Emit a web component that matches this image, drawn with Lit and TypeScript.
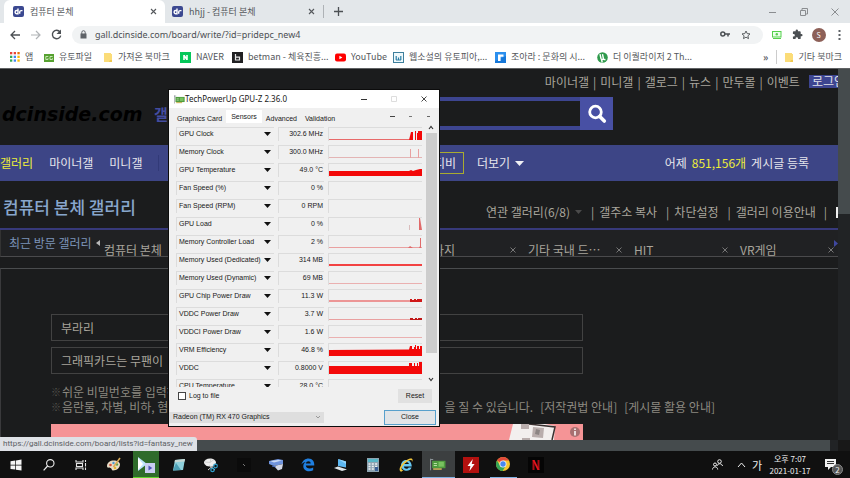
import { LitElement, html, svg, css } from "lit";
import { customElement } from "lit/decorators.js";
import { classMap } from "lit/directives/class-map.js";

const shared = css`
  *,
  *::before,
  *::after { box-sizing: border-box; }
  button, input, select { font: inherit; color: inherit; margin: 0; padding: 0; border: 0; background: none; border-radius: 0; outline: 0; min-width: 0; }
  button { display: inline-flex; align-items: center; justify-content: center; white-space: nowrap; }
  a { color: inherit; text-decoration: none; white-space: nowrap; }
  svg { display: block; flex: none; }
`;

/* ---------- icons ---------- */
const dcIcon = html`<svg width="11" height="11" viewBox="0 0 11 11"><rect width="11" height="11" rx="2" fill="#3b4890"/><path d="M5 2.5v5.2H3.7a1.6 1.6 0 0 1 0-3.2H5M9.5 4.6H8.2a1.5 1.5 0 0 0-1.5 1.5v1.6" fill="none" stroke="#fff" stroke-width="1.4"/></svg>`;
const closeIcon = html`<svg width="7" height="7" viewBox="0 0 7 7"><path d="M1 1l5 5M6 1L1 6" stroke="#55585c" stroke-width="1.1"/></svg>`;
const folderIcon = html`<svg width="10" height="11" viewBox="0 0 10 11"><path d="M1 1h7v1h1v8H1z" fill="#fbdc78"/><path d="M7 8h2v2H6z" fill="#f0c850"/></svg>`;

const bookmarkIcons: Record<string, unknown> = {
  apps: html`<svg width="10" height="10" viewBox="0 0 10 10">
    ${[0, 1, 2].map((r) => [0, 1, 2].map((c) => svg`<rect x=${c * 3.7} y=${r * 3.7} width="2.3" height="2.3" fill=${["#ea4335", "#ea4335", "#e8710a", "#34a853", "#4285f4", "#fbbc04", "#34a853", "#4285f4", "#fbbc04"][r * 3 + c]}/>`))}
  </svg>`,
  file: html`<svg width="10" height="9" viewBox="0 0 10 9"><rect y="1" width="10" height="8" fill="#56a130"/><path d="M4.3 3.5H1.8v3h2.2V5.2M8.6 3.5H6v3h2.4V5.2" fill="none" stroke="#d5eec4" stroke-width=".9"/></svg>`,
  folder: folderIcon,
  naver: html`<svg width="11" height="11" viewBox="0 0 11 11"><rect width="11" height="11" fill="#05c75a"/><path d="M3.2 8V3h1.6l1.4 2.2V3h1.6v5H6.2L4.8 5.8V8z" fill="#fff"/></svg>`,
  betman: html`<svg width="11" height="11" viewBox="0 0 11 11"><rect width="11" height="11" fill="#202022"/><path d="M3.5 2v6h4V5.2h-4" fill="none" stroke="#e6e6e6" stroke-width="1.2"/></svg>`,
  youtube: html`<svg width="11" height="11" viewBox="0 0 11 11"><rect y="1.6" width="11" height="7.8" rx="2" fill="#f00"/><path d="M4.4 3.7v3.6l3-1.8z" fill="#fff"/></svg>`,
  novel: html`<svg width="11" height="11" viewBox="0 0 11 11"><rect x=".5" y=".5" width="10" height="10" fill="#eef8fb" stroke="#3d7f9c"/><path d="M3.200 4v4M5.500 5.500v2.500M7.800 4v4M3 8h5" stroke="#2a7ea6" stroke-width="1.200"/></svg>`,
  joara: html`<svg width="11" height="11" viewBox="0 0 11 11"><rect width="11" height="11" fill="#1677d8"/><path d="M0 0h11v4L0 9z" fill="#2b8fee"/><path d="M3 9V2.5h5.5v2.2H5.6V9z" fill="#fff"/></svg>`,
  torrent: html`<svg width="11" height="11" viewBox="0 0 11 11"><circle cx="5.5" cy="5.5" r="5.3" fill="#2f9a4c"/><path d="M3 2.2l1 4.3c.4 1.5 2.6 1.2 2.3-.4l-.8-3.9M6.5 6.5c.3 1.2 1 1.3 2 1M4.4 7l.8 3.4" fill="none" stroke="#fff" stroke-width="1.4"/></svg>`,
};

const bookmarks: [string, string][] = [
  ["apps", "앱"],
  ["file", "유토파일"],
  ["folder", "가져온 북마크"],
  ["naver", "NAVER"],
  ["betman", "betman - 체육진흥..."],
  ["youtube", "YouTube"],
  ["novel", "웹소설의 유토피아,..."],
  ["joara", "조아라 : 문화의 시..."],
  ["torrent", "더 이퀄라이저 2 Th..."],
];

/* ---------- sensor window ---------- */
const S = "#f30808";
const P = "#e9a0a0";
const sensors: [string, string, unknown][] = [
  ["GPU Clock", "302.6 MHz", svg`<path d="M0 11.5h80" stroke="#e86a6a"/><path d="M80 12l2-8h2v8zM86 12V3h1v9zM88 12V5h1V3h4v9z" fill=${S}/>`],
  ["Memory Clock", "300.0 MHz", svg`<path d="M0 11.5h93" stroke="#e3b4b4"/><path d="M81.500 3v9M89.500 3v9" stroke=${P}/>`],
  ["GPU Temperature", "49.0 °C", svg`<path d="M0 12V7h80l2-1 2 1 3-1 4-1h2v7z" fill=${S}/>`],
  ["Fan Speed (%)", "0 %", ""],
  ["Fan Speed (RPM)", "0 RPM", ""],
  ["GPU Load", "0 %", svg`<path d="M80.500 7v5" stroke="#d9bcbc"/><path d="M90 12V0h1l2 12z" fill="#e06a6a"/>`],
  ["Memory Controller Load", "2 %", svg`<path d="M0 11.500h93" stroke=${P}/><path d="M79 12l2-2 3 2zM90 12l1-2V2h1v10z" fill="#e06a6a"/>`],
  ["Memory Used (Dedicated)", "314 MB", svg`<path d="M0 11h93" stroke=${S} stroke-width="1.400"/>`],
  ["Memory Used (Dynamic)", "69 MB", svg`<path d="M0 11.500h93" stroke=${P} stroke-width=".8"/>`],
  ["GPU Chip Power Draw", "11.3 W", svg`<path d="M0 11h93" stroke="#e83c3c" stroke-width="1.200"/><path d="M81 11V9h2v1h2V9h2v1h1V9h5v3H81z" fill="#d01818"/>`],
  ["VDDC Power Draw", "3.7 W", svg`<path d="M0 11.500h93" stroke=${P}/><path d="M81 10h3v1h2v-1h2v1h1v-1h4v2H81z" fill="#c01818"/>`],
  ["VDDCI Power Draw", "1.6 W", svg`<path d="M0 11.500h93" stroke=${P} stroke-width=".8"/>`],
  ["VRM Efficiency", "46.8 %", svg`<path d="M0 12V6l80-.5 1-3.500h2v3h2V3h1V1h1v4h1V2h2v3h1V2h2v10z" fill=${S}/>`],
  ["VDDC", "0.8000 V", svg`<path d="M0 12V4h80V1h3v3h2V1h1v3h2V1h1v3h1V0h3v12z" fill=${S}/>`],
  ["CPU Temperature", "28.0 °C", ""],
];

const cardIcon = (w: number, h: number) => html`<svg width=${w} height=${h} viewBox="0 0 15 11"><path d="M.5 0v11M0 .8h3" stroke="#8a9296"/><rect x="2" y="2" width="12.500" height="7" fill="#4f9a3e"/><path d="M3 9h8v1.500H3z" fill="#c9b458"/><rect x="8" y="3" width="5" height="4.500" fill="#79c25f"/><path d="M3.500 4.500h3M3.500 6.500h3" stroke="#b8e2a6"/></svg>`;

@customElement("gpu-window")
export class GpuWindow extends LitElement {
  static styles = [
    shared,
    css`
      :host { display: flex; flex-direction: column; background: #f0f0f0; color: #181818; font: 7px/10px "Liberation Sans", Arial, sans-serif; box-shadow: 0 0 0 1px #0c0c0c; }
      .title { display: flex; align-items: center; height: 18px; padding-left: 5px; background: #fff; font: 8px/14px "Noto Sans", sans-serif; }
      .title span { flex: 1; }
      .title button { width: 30px; height: 18px; }
      .tabs { display: flex; height: 17px; padding: 2px 0 0 4px; align-items: flex-start; }
      .tabs button { height: 15px; padding: 2px 4px 0; }
      .tabs .on { height: 13px; padding: 0 5px; background: #fff; }
      .tools { margin-left: auto; display: flex; gap: 13px; padding: 5px 8px 0 0; }
      .list { display: flex; height: 263px; padding: 3px 2px 0 7px; gap: 3px; margin-top: -1px; }
      table { display: block; flex: 1; min-width: 0; height: 260px; overflow: hidden; border-spacing: 0; }
      tbody { display: grid; gap: 4px; }
      tr { display: grid; grid-template-columns: 98px 46px 94px; gap: 4px; height: 14px; }
      td, th { padding: 0; font-weight: 400; text-align: left; border-top: 1px solid #dcdcdc; border-left: 1px solid #dcdcdc; overflow: hidden; }
      th button { display: flex; width: 100%; height: 12px; padding: 0 3px 0 2px; justify-content: space-between; }
      .val { text-align: right; line-height: 12px; padding-right: 1px; }
      .bar { width: 12px; display: flex; flex-direction: column; align-items: center; gap: 2px; padding: 1px 0 4px; margin-top: -3px; height: 263px; }
      .thumb { width: 11px; flex: 1; margin-bottom: 22px; background: #cdcdcd; }
      .row { display: flex; align-items: center; justify-content: space-between; }
      .log { height: 17px; padding: 0 7px 0 9px; }
      label { display: flex; align-items: center; gap: 3px; }
      .tick { appearance: none; width: 8px; height: 8px; border: 1px solid #444; background: #fff; }
      .reset { width: 34px; height: 14px; background: #e1e1e1; }
      .foot { height: 18px; margin-top: 4px; padding-right: 3px; }
      .pick { position: relative; display: flex; align-items: center; }
      .pick svg { position: absolute; right: 3px; }
      select { appearance: none; width: 155px; height: 11px; padding-left: 4px; background: #dedede; }
      .close { width: 52px; height: 15px; background: #e1e4e7; border: 1px solid #58a0cc; }
    `,
  ];

  render() {
    return html`
      <div class="title">
        ${cardIcon(11, 9)}<span>TechPowerUp GPU-Z 2.36.0</span>
        <button aria-label="Minimize"><svg width="6" height="6"><path d="M0 3.500h6" stroke="#333"/></svg></button>
        <button aria-label="Maximize"><svg width="6" height="6"><path d="M.5.5h5v5h-5z" fill="none" stroke="#ddd"/></svg></button>
        <button aria-label="Close"><svg width="6" height="6"><path d="M.5.5l5 5M5.500.5l-5 5" stroke="#333" stroke-width=".9"/></svg></button>
      </div>
      <div class="tabs">
        <button>Graphics Card</button><button class="on">Sensors</button><button>Advanced</button><button>Validation</button>
        <div class="tools">
          <svg width="5" height="4"><path d="M0 1h5v1H0z" fill="#444"/></svg>
          <svg width="5" height="4"><path d="M1 1h3v1H1z" fill="#777"/></svg>
          <svg width="5" height="4"><path d="M1 1h3v1H1z" fill="#666"/></svg>
        </div>
      </div>
      <div class="list">
        <table>
          <tbody>
            ${sensors.map(
              ([name, value, plot]) => html`<tr>
                <th scope="row"><button>${name}<svg width="7" height="4" viewBox="0 0 7 4"><path d="M0 0h7L3.500 4z" fill="#111"/></svg></button></th>
                <td class="val">${value}</td>
                <td><svg width="93" height="12" viewBox="0 0 93 12">${plot}</svg></td>
              </tr>`
            )}
          </tbody>
        </table>
        <div class="bar">
          <svg width="6" height="6"><path d="M1 4l2-2.500L5 4" fill="none" stroke="#333" stroke-width="1.200"/></svg>
          <div class="thumb"></div>
          <svg width="6" height="6"><path d="M1 1l2 2.500L5 1" fill="none" stroke="#333" stroke-width="1.200"/></svg>
        </div>
      </div>
      <div class="row log">
        <label><input class="tick" type="checkbox" />Log to file</label>
        <button class="reset">Reset</button>
      </div>
      <div class="row foot">
        <div class="pick">
          <select aria-label="Graphics card"><option>Radeon (TM) RX 470 Graphics</option></select>
          <svg width="6" height="4"><path d="M1 1l2 2 2-2" fill="none" stroke="#999"/></svg>
        </div>
        <button class="close">Close</button>
      </div>
    `;
  }
}

/* ---------- taskbar ---------- */
const g = (body: unknown) => html`<svg width="16" height="16" viewBox="0 0 16 16">${body}</svg>`;
const apps: [string, string, unknown][] = [
  ["Start", "", g(svg`<path d="M2.500 4.200l4.800-.7v4.200H2.500zM8 3.400l5.500-.8v5.100H8zM2.500 8.400h4.800v4.200l-4.800-.7zM8 8.400h5.500v5.100L8 12.700z" fill="#f4f4f4"/>`)],
  ["Search", "", g(svg`<circle cx="9.300" cy="6.300" r="3.700" fill="none" stroke="#eee" stroke-width="1.100"/><path d="M6.600 9l-4 4.300" stroke="#eee" stroke-width="1.200"/>`)],
  ["Task view", "", g(svg`<path d="M3 3v2h7V3M3 13v-2h7v2M3.500 6.500h6v3h-6zM12.500 3v2M12.500 6v3.500M12.500 10.500v2.500" fill="none" stroke="#e4e4e4" stroke-width="1.100"/>`)],
  ["Paint", "", g(svg`<path d="M1 9c0-4 4-6 8-5.500 3 .4 5 2 5 4 0 3-3 6-7 6-1.500 0-1-2-2.500-2.500S1 11 1 9z" fill="#e8dcc4"/><circle cx="4.500" cy="8" r="1.300" fill="#d8503a"/><circle cx="7.500" cy="6" r="1.200" fill="#4a9bd4"/><circle cx="11" cy="7.500" r="1.200" fill="#5aa648"/><circle cx="9" cy="11" r="1.300" fill="#e6b632"/><path d="M14 1L7.500 10" stroke="#d8aa58" stroke-width="1.600"/>`)],
  ["Player", "green", html`<svg width="22" height="18" viewBox="0 0 22 18"><path d="M3 2l9 7-9 7z" fill="#bfe4ff"/><path d="M3 3l5 6-5 6z" fill="#fff"/><rect x="10" y="8" width="10" height="10" fill="#c9cdf2"/><path d="M13.500 10.500v5l3.800-2.500z" fill="#4d54b8"/></svg>`],
  ["Notes", "", g(svg`<path d="M4 3l10-1-2 11-10 .5z" fill="#8fd0dc"/><path d="M4 3l10-1-.4 2.500-10 .8z" fill="#c7d8d4"/><path d="M5 6l5 7-8 .5z" fill="#4d9fb4"/>`)],
  ["Snip", "", g(svg`<ellipse cx="7" cy="5.500" rx="6" ry="4" fill="#eee"/><path d="M2 5l5 .5 1-4M7 5.500l4-3" stroke="#c4c4c4" fill="none" stroke-width=".7"/><path d="M5 13l7-6M6 8l6 5" stroke="#d5d5d5"/><circle cx="12.500" cy="9" r="1.800" fill="none" stroke="#2f9fcc" stroke-width="1.200"/><circle cx="9.500" cy="13" r="1.700" fill="none" stroke="#2f9fcc" stroke-width="1.200"/>`)],
  ["Console", "", g(svg`<path d="M1 1h14v14H1z" fill="#0b0b0b"/><path d="M7 7l2 2" stroke="#777"/>`)],
  ["Scanner", "", g(svg`<path d="M1 4l9-2 5 1v4l-9 2-5-2z" fill="#6f93dc"/><path d="M2 4l8-1 4 .6-8 1.900z" fill="#cddcf6"/><path d="M6 9l9-2-1 5-4 1.500z" fill="#d3d8e6"/><path d="M4 9l4 1" stroke="#4d70c0"/>`)],
  ["Edge", "", g(svg`<path d="M1.500 7.500C2.500 3.500 5.500 1.500 8.500 1.500c4 0 6 3 5.800 7H5.800c.2 3 4.200 3.800 7.400 2v2.700c-4.500 2.300-9.700.6-9.900-3.700-.1-2 .9-3.600 2.500-4.500-1.900.3-3.300 1.200-4.300 2.500zM5.900 6.500h4.800c0-3-4.300-3-4.800 0z" fill="#1f7fe0"/>`)],
  ["Computer", "", g(svg`<path d="M5 2l8 2.500v6L5 9z" fill="#5db8f2"/><path d="M5 2l8 2.500V7z" fill="#97d6fb"/><path d="M1 11l4-1.500 9 3-5 1.500z" fill="#dfe6ea"/>`)],
  ["Calculator", "", g(svg`<rect x="2" y="1" width="12" height="14" fill="#8ea3b0"/><rect x="3" y="2" width="10" height="3" fill="#58b7c8"/><path d="M3.500 7h9M3.500 9.500h9M3.500 12h9" stroke="#edf1f3" stroke-width="1.500" stroke-dasharray="2 1.300"/><path d="M10 10h3v4h-3z" fill="#3b6096"/>`)],
  ["Internet Explorer", "", g(svg`<path d="M13.800 9.500H5.900c.3 2.600 3.700 3 4.800 1h2.900c-1.800 5-10.500 4-10.500-2.300 0-7 10.600-7.600 10.700 1.300zM6 7h4.900C10.600 4.500 6.500 4.500 6 7z" fill="#66c8f3"/><path d="M2.500 14.500C-1 12 6 3 12 1.500c3-.6 3 1.500 2 3.500.2-2-.8-2.500-3-1.500C5 6.500 1 13.500 5.500 13c-1 1-2 2-3 1.500z" fill="#f2c63c"/>`)],
  ["GPU-Z", "active", cardIcon(16, 13)],
  ["Flash", "", g(svg`<rect width="16" height="16" fill="#b3110f"/><path d="M9.800 2L4.500 9h2.900L6.500 14 11.600 7H8.700z" fill="#fff"/>`)],
  ["Chrome", "open", g(svg`<circle cx="8" cy="8" r="7" fill="#f6c52d"/><path d="M8 8L2 4.400A7 7 0 0 1 14.100 4.600H8z" fill="#e24a3b"/><path d="M2 4.400A7 7 0 0 0 7.600 15L10.800 9.800 8 8 5 9.500z" fill="#33a457"/><circle cx="8" cy="8" r="3.500" fill="#f2f2f2"/><circle cx="8" cy="8" r="2.700" fill="#4688f1"/>`)],
  ["Netflix", "", g(svg`<rect width="16" height="16" fill="#050505"/><path d="M5.500 3v10M10.500 3v10" stroke="#a80d14" stroke-width="2"/><path d="M4.500 3h2l5 10h-2z" fill="#e5131d"/>`)],
];

@customElement("task-bar")
export class TaskBar extends LitElement {
  static styles = [
    shared,
    css`
      :host { display: flex; justify-content: space-between; height: 27px; background: #101010; color: #eee; font: 8px/12px "Noto Sans CJK KR", sans-serif; }
      .apps { display: grid; grid-template-columns: repeat(17, 1fr); width: 552px; }
      .green { background: #2f6b2b; border-bottom: 1px solid #62d42c; margin: 0 3px; }
      .active { background: #3c3f40; border-bottom: 1px solid #7fb2e4; }
      .open { border-bottom: 1px solid #7fb2e4; margin: 0 3px; }
      .tray { display: flex; align-items: center; }
      .tray button { height: 27px; }
      .people { width: 30px; }
      .more { width: 18px; }
      .ime { width: 14px; font-size: 11px; }
      .clock { flex-direction: column; width: 52px; text-align: center; }
      .note { position: relative; width: 28px; margin-right: 6px; }
      .count { position: absolute; right: 1px; bottom: 3px; width: 11px; height: 11px; border-radius: 50%; background: #555; border: 1px solid #888; line-height: 9px; }
    `,
  ];

  render() {
    return html`
      <div class="apps">
        ${apps.map(([label, state, icon]) => html`<button aria-label=${label} class=${state}>${icon}</button>`)}
      </div>
      <div class="tray">
        <button class="people" aria-label="People"><svg width="11" height="11" viewBox="0 0 11 11"><circle cx="7.500" cy="2.500" r="1.800" fill="none" stroke="#eee"/><path d="M5 7c.5-3 5-3 5.500 0" fill="none" stroke="#eee"/><circle cx="3" cy="5.500" r="1.500" fill="none" stroke="#eee"/><path d="M.5 10.500c.3-3.500 5-3.500 5.200 0" fill="none" stroke="#eee"/></svg></button>
        <button class="more" aria-label="Hidden icons"><svg width="9" height="6"><path d="M1 5l3.500-4L8 5" fill="none" stroke="#eee"/></svg></button>
        <button class="ime">가</button>
        <button class="clock"><span>오후 7:07</span><span>2021-01-17</span></button>
        <button class="note" aria-label="Notifications"><svg width="13" height="13" viewBox="0 0 13 13"><path d="M1 1h11v8H7l-3 3V9H1z" fill="#f2f2f2"/><path d="M3 3.500h7M3 5.500h7" stroke="#333"/></svg><span class="count">2</span></button>
      </div>
    `;
  }
}

/* ---------- browser ---------- */
@customElement("app-root")
export class AppRoot extends LitElement {
  static styles = [
    shared,
    css`
      :host { position: relative; display: flex; flex-direction: column; min-height: 100vh; overflow: hidden; background: #1b1c1d; font: 9px/14px "Noto Sans CJK KR", sans-serif; color: #55585c; }

      .strip { display: flex; height: 23px; padding-left: 4px; background: #e3e7ea; align-items: center; }
      .tab { display: flex; align-items: center; gap: 6px; width: 161px; height: 23px; padding: 0 8px 0 9px; }
      .tab span { flex: 1; text-align: left; }
      .tab.on { background: #fff; border-radius: 6px 6px 0 0; }
      .tab.back { width: 159px; padding: 0 8px 0 7px; border-right: 1px solid #aeb2b6; height: 13px; }
      .plus { width: 28px; }
      .wins { display: flex; margin-left: auto; }
      .wins button { width: 31px; height: 20px; }

      .tools { display: flex; align-items: center; height: 23px; background: #fff; padding-left: 4px; }
      .tools > button { width: 21px; height: 20px; }
      .omni { display: flex; align-items: center; flex: 1; height: 18px; border-radius: 9px; background: #f1f3f4; padding: 0 7px 0 8px; margin: 0 3px 0 5px; }
      .omni input { flex: 1; margin-left: 8px; font: 9px/14px "Noto Sans", sans-serif; color: #4c4f53; }
      .omni button { width: 21px; }
      .face { width: 14px; height: 14px; border-radius: 50%; background: #8d6058; color: #fff; font-size: 7px; }

      .marks { display: grid; grid-template-columns: 34px 59px 77px 52px 103px 58px 102px 102px 1fr auto auto; height: 22px; padding: 0 8px 0 10px; background: #fff; align-items: center; }
      .marks a { display: flex; align-items: center; gap: 5px; }
      .chev { width: 16px; font-size: 10px; font-weight: 700; }
      .other { border-left: 1px solid #ccc; padding-left: 7px; margin-left: 2px; }

      .view { display: grid; grid-template-columns: minmax(0, 1fr) 12px; grid-template-rows: 1fr 11px; flex: 1; border-top: 1px solid #606264; }
      .page { overflow: hidden; font-size: 12px; line-height: 16px; color: #a9a59c; }
      .vbar { background: #212325; }
      .vthumb { height: 145px; background: #454b4d; }
      .hbar { background: #212325; padding-right: 8px; }
      .hthumb { height: 11px; background: #454b4d; }
      .corner { background: #181818; }

      .head { display: grid; grid-template-rows: 28px 33px; height: 76px; }
      .links { display: flex; justify-content: flex-end; align-items: center; margin-right: -10px; padding-bottom: 3px; }
      .links a + a::before { content: "|"; margin: 0 4px; }
      .links .login { background: #3d4590; color: #e2e2ea; margin-left: 9px; padding: 0 3px; line-height: 12px; height: 13px; }
      .links .login::before { display: none; }
      .find { display: flex; align-items: center; }
      .logo { width: 154px; padding-left: 2px; color: #000; font: italic bold 19px/20px "DejaVu Sans", sans-serif; }
      .gal { width: 46px; color: #434ca0; font-size: 15px; font-weight: 700; }
      .search { width: 380px; height: 33px; border: 4px solid #3d4590; border-right: 0; padding: 0 8px; }
      .go { width: 33px; height: 33px; background: #4850a4; }

      nav { display: flex; align-items: center; height: 36px; background: #3d4586; color: #e6e6ec; }
      .main { display: flex; gap: 16px; width: 428px; }
      .main a:last-child { border-right: 1px solid #323a78; padding-right: 16px; }
      .hot { color: #ecec3a; }
      .db { border: 1px solid #a9ab30; width: 36px; padding-right: 7px; height: 22px; text-align: right; line-height: 20px; }
      .plusmore { display: flex; align-items: center; gap: 5px; margin-left: 13px; }
      .stat { display: flex; gap: 5px; margin-left: auto; margin-right: 29px; white-space: nowrap; }

      .name { display: flex; align-items: center; justify-content: space-between; height: 49px; border-bottom: 2px solid #37397a; }
      h1 { margin: 0 0 0 3px; padding-top: 5px; font-size: 17px; line-height: 24px; font-weight: 500; color: #88a6cc; white-space: nowrap; }
      .acts { display: flex; align-items: center; padding-top: 15px; }
      .acts a + a::before { content: "|"; margin: 0 5px 0 9px; }
      .acts .rel { display: flex; align-items: center; gap: 5px; }
      .acts i { width: 2px; height: 11px; margin-left: 9px; background: #f0f0f0; }
      .acts .sep { margin-left: 8px; }

      .recent { display: flex; height: 27px; background: #202123; border-bottom: 1px solid #4a4a4c; border-left: 1px solid #333; }
      .recent > b { width: 101px; display: flex; gap: 4px; padding: 4px 0 0 8px; font-weight: 400; color: #7c93b8; align-items: center; height: 22px; white-space: nowrap; }
      .seen { display: grid; grid-template-columns: repeat(7, 106px); flex: 1; min-width: 0; padding: 13px 0 0 2px; overflow: hidden; }
      .seen div { display: flex; justify-content: space-between; padding-right: 12px; white-space: nowrap; align-items: center; height: 14px; }
      .seen .skip { grid-column: 4; }
      .next { width: 4px; padding-top: 10px; }

      .form { margin-top: 11px; border-top: 1px solid #4a4c4e; border-left: 1px solid #3a3a3c; padding: 45px 0 0 50px; }
      .form > input { display: block; width: 532px; height: 27px; margin-bottom: 6px; border: 1px solid #424242; padding: 0 9px; }
      .tips { margin: 10px 0 0; line-height: 15px; color: #8c8980; white-space: nowrap; }
      .tips div { display: flex; }
      .tips i { width: 11px; font-style: normal; font-size: 10px; color: #55534e; }
      .rules { display: flex; gap: 7px; margin-left: auto; }
      .tips .split { width: 664px; }
      .ad { display: flex; justify-content: flex-end; width: 532px; height: 16px; margin-top: 10px; background: #f59496; }

      .status { position: absolute; left: 0; bottom: 27px; height: 14px; width: 197px; padding-left: 3px; background: #dee1e6; border-radius: 0 3px 0 0; font: 8px/14px Roboto, sans-serif; color: #5c6064; white-space: nowrap; }
      gpu-window { position: absolute; left: 169px; top: 90px; width: 270px; height: 336px; }
    `,
  ];

  render() {
    const x = html`<svg width="6" height="6"><path d="M.5.5l5 5M5.500.5l-5 5" stroke="#777"/></svg>`;
    return html`
      <div class="strip">
        ${[["컴퓨터 본체", true], ["hhjj - 컴퓨터 본체", false]].map(
          ([label, on]) => html`<button class=${classMap({ tab: true, on: !!on, back: !on })}>${dcIcon}<span>${label}</span>${closeIcon}</button>`
        )}
        <button class="plus" aria-label="New tab"><svg width="9" height="9"><path d="M4.500 0v9M0 4.500h9" stroke="#4c5054" stroke-width="1.300"/></svg></button>
        <div class="wins">
          <button aria-label="Minimize"><svg width="8" height="8"><path d="M0 4.500h7" stroke="#8a8d90"/></svg></button>
          <button aria-label="Restore"><svg width="8" height="8"><path d="M.5 2.500h5v5h-5zM2 2V.5h5.500v5.500H6" fill="none" stroke="#8a8d90"/></svg></button>
          <button aria-label="Close"><svg width="8" height="8"><path d="M.5.5l7 7M7.500.5l-7 7" stroke="#8a8d90"/></svg></button>
        </div>
      </div>

      <div class="tools">
        <button aria-label="Back"><svg width="10" height="10"><path d="M10 5H1.500M5 1L1 5l4 4" fill="none" stroke="#4c5054" stroke-width="1.300"/></svg></button>
        <button aria-label="Forward"><svg width="10" height="10"><path d="M0 5h8.500M5 1l4 4-4 4" fill="none" stroke="#b0b3b6" stroke-width="1.200"/></svg></button>
        <button aria-label="Reload"><svg width="11" height="11"><path d="M9 3a4.200 4.200 0 1 0 .7 3.600" fill="none" stroke="#4c5054" stroke-width="1.400"/><path d="M10 .5V5H5.500z" fill="#4c5054"/></svg></button>
        <div class="omni">
          <svg width="7" height="9" viewBox="0 0 7 9"><path d="M.5 3.500h6V8.500h-6z" fill="#5f6368"/><path d="M1.800 4V2.400a1.700 1.700 0 0 1 3.400 0V4" fill="none" stroke="#5f6368"/></svg>
          <input aria-label="Address" value="gall.dcinside.com/board/write/?id=pridepc_new4" />
          <button aria-label="Passwords"><svg width="10" height="7"><circle cx="2.800" cy="3" r="2" fill="none" stroke="#4c5054" stroke-width="1.500"/><path d="M4.500 3H10M8 3v2.500" stroke="#4c5054" stroke-width="1.500"/></svg></button>
          <button aria-label="Bookmark"><svg width="10" height="10" viewBox="0 0 10 10"><path d="M5 1l1.200 2.600 2.800.3-2.100 1.900.6 2.800L5 7.200 2.500 8.600l.6-2.800L1 3.900l2.800-.3z" fill="none" stroke="#4c5054" stroke-width=".9"/></svg></button>
        </div>
        <button aria-label="Screen extension"><svg width="10" height="8"><rect x=".5" y=".5" width="8.500" height="5.500" fill="#eaffea" stroke="#55d04c"/><path d="M1 7.500h8" stroke="#55d04c"/><circle cx="4.800" cy="3.200" r="1.200" fill="#55d04c"/></svg></button>
        <button aria-label="Extensions"><svg width="11" height="11" viewBox="0 0 24 24"><path d="M20.500 11H19V7a2 2 0 0 0-2-2h-4V3.500a2.500 2.500 0 0 0-5 0V5H4a2 2 0 0 0-2 2v3.800h1.500a2.700 2.700 0 0 1 0 5.400H2V20a2 2 0 0 0 2 2h3.800v-1.500a2.700 2.700 0 0 1 5.400 0V22H17a2 2 0 0 0 2-2v-4h1.500a2.500 2.500 0 0 0 0-5z" fill="#4c5054"/></svg></button>
        <button aria-label="Profile"><span class="face">S</span></button>
        <button aria-label="Menu"><svg width="3" height="10"><path d="M.5 0h2v2h-2zM.5 4h2v2h-2zM.5 8h2v2h-2z" fill="#5f6368"/></svg></button>
      </div>

      <div class="marks">
        ${bookmarks.map(([icon, label]) => html`<a href="#">${bookmarkIcons[icon]}${label}</a>`)}
        <button class="chev" aria-label="More bookmarks">»</button>
        <a class="other" href="#">${folderIcon}기타 북마크</a>
      </div>

      <div class="view">
        <div class="page">
          <div class="head">
            <div class="links">
              ${["마이너갤", "미니갤", "갤로그", "뉴스", "만두몰", "이벤트"].map((t) => html`<a href="#">${t}</a>`)}
              <a class="login" href="#">로그인</a>
            </div>
            <div class="find">
              <a class="logo" href="#">dcinside.com</a>
              <a class="gal" href="#">갤</a>
              <input class="search" type="search" aria-label="Search" />
              <button class="go" aria-label="Search"><svg width="20" height="20" viewBox="0 0 20 20"><circle cx="8.500" cy="8" r="5.800" fill="none" stroke="#fff" stroke-width="2.800"/><path d="M12.800 12.500l4.500 4.500" stroke="#fff" stroke-width="3.600" stroke-linecap="round"/></svg></button>
            </div>
          </div>
          <nav>
            <div class="main"><a class="hot" href="#">갤러리</a><a href="#">마이너갤</a><a href="#">미니갤</a></div>
            <a class="db" href="#">디비</a>
            <a class="plusmore" href="#">더보기<svg width="9" height="5"><path d="M0 0h9L4.500 5z" fill="#f0f0f4"/></svg></a>
            <span class="stat"><span>어제</span><span class="hot">851,156개</span><span>게시글 등록</span></span>
          </nav>
          <div class="name">
            <h1>컴퓨터 본체 갤러리</h1>
            <div class="acts">
              <a class="rel" href="#">연관 갤러리(6/8)<svg width="7" height="4"><path d="M0 0h7L3.500 4z" fill="#4a4a4a"/></svg></a>
              <a href="#">갤주소 복사</a><a href="#">차단설정</a><a href="#">갤러리 이용안내</a><span class="sep">|</span><i></i>
            </div>
          </div>
          <div class="recent">
            <b>최근 방문 갤러리<svg width="4" height="6"><path d="M4 0v6L0 3z" fill="#b8b8b8"/></svg></b>
            <div class="seen">
              <div>컴퓨터 본체</div>
              <div class="skip">판타지 ${x}</div>
              <div>기타 국내 드⋯ ${x}</div>
              <div>HIT ${x}</div>
              <div>VR게임 ${x}</div>
            </div>
            <div class="next"><svg width="4" height="7"><path d="M0 0l4 3.500L0 7z" fill="#3f48a0"/></svg></div>
          </div>
          <div class="form">
            <input aria-label="Nickname" value="부라리" />
            <input aria-label="Title" value="그래픽카드는 무팬이" />
            <div class="tips">
              <div><i>※</i><span>쉬운 비밀번호를 입력하</span></div>
              <div class="split"><i>※</i><span>음란물, 차별, 비하, 혐</span><span class="rules"><span>을 질 수 있습니다.</span><a href="#">[저작권법 안내]</a><a href="#">[게시물 활용 안내]</a></span></div>
            </div>
            <div class="ad"><svg width="74" height="16" viewBox="0 0 74 16"><path d="M4 0h32l10 2-1 14H0z" fill="#f3efee"/><path d="M20 0l26 3-3 13" fill="none" stroke="#3a3030" stroke-width="1.500"/><path d="M12 0h8v5h-8zM24 3l11 1-1 10-11-1zM13 14h8v2h-8z" fill="#b9adac"/><path d="M27 5l4 1-1 5-4-1z" fill="#8d8584"/><circle cx="66" cy="8" r="5" fill="#a87070"/><path d="M66 4.500v1.500M66 7v4.500" stroke="#fff" stroke-width="1.500"/></svg></div>
          </div>
        </div>
        <div class="vbar"><div class="vthumb"></div></div>
        <div class="hbar"><div class="hthumb"></div></div>
        <div class="corner"></div>
      </div>
      <task-bar></task-bar>
      <div class="status">https://gall.dcinside.com/board/lists?id=fantasy_new</div>
      <gpu-window></gpu-window>
    `;
  }
}
